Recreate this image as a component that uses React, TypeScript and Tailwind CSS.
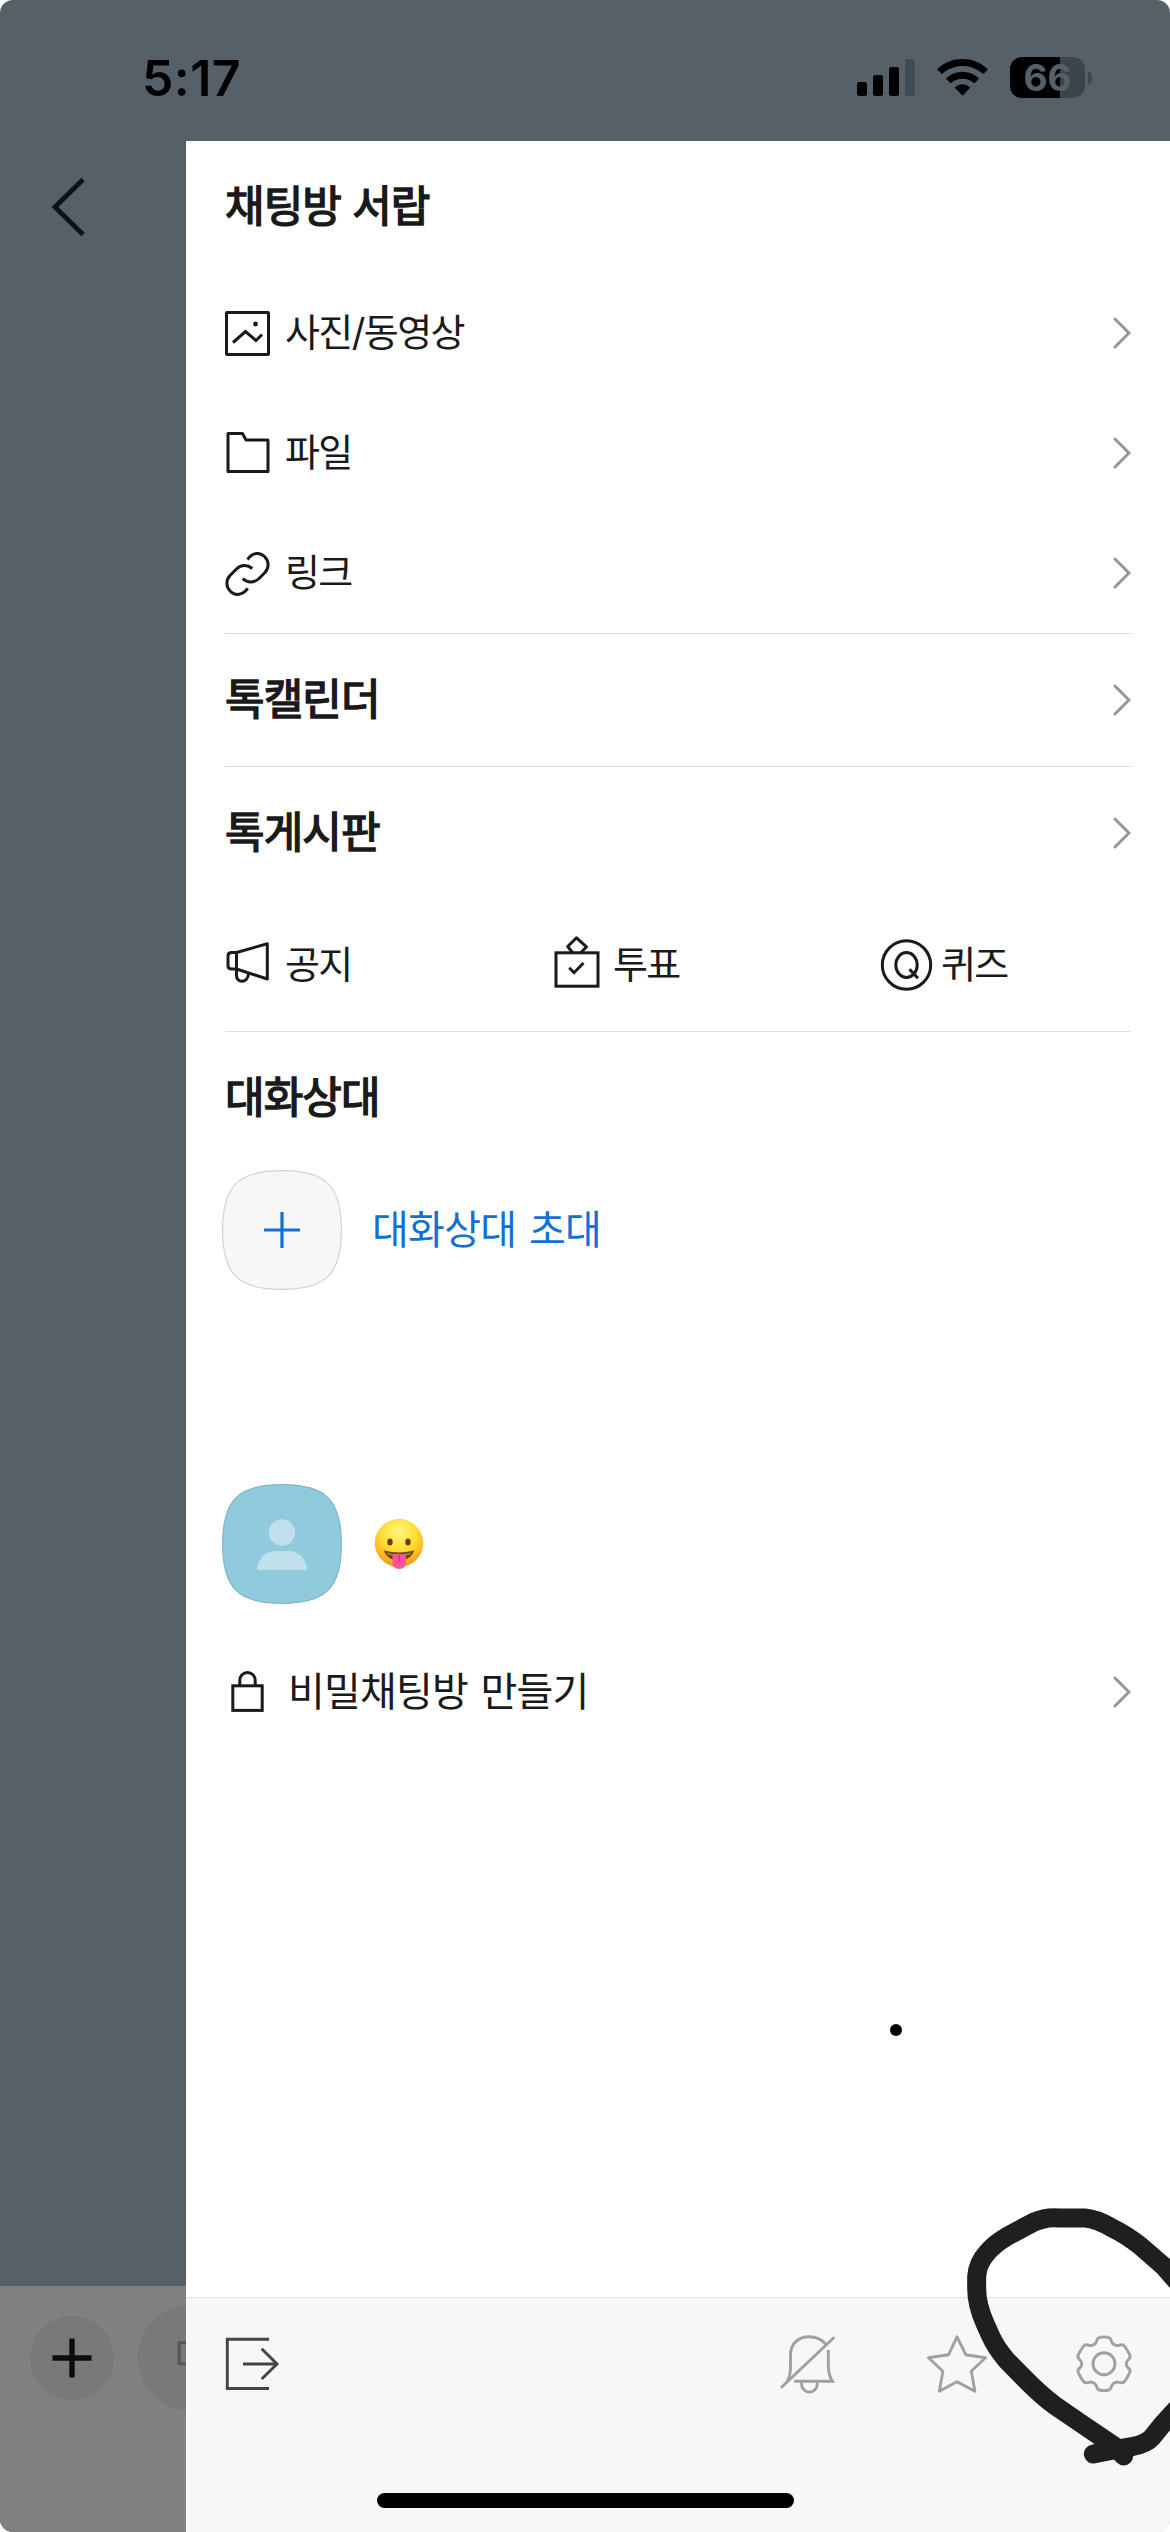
import type { ReactNode } from "react";

const ChevronRight = () => (
  <svg className="w-5 h-9" viewBox="0 0 20 36" fill="none" stroke="#969696" strokeWidth="3" strokeLinecap="round">
    <path d="M4 4L18 18L4 32" />
  </svg>
);

const LineIcon = ({ children }: { children: ReactNode }) => (
  <svg className="w-12 h-12 shrink-0 overflow-visible" viewBox="0 0 48 48" fill="none" stroke="#1a1a1a" strokeWidth="3">
    {children}
  </svg>
);

const PhotoIcon = () => (
  <LineIcon>
    <rect x="2.5" y="3.5" width="42" height="42" rx="0.5" />
    <path d="M9 33.5L21.5 22.5L32 31.5L38 25.5" />
    <circle cx="31.5" cy="15" r="2.4" fill="#1a1a1a" stroke="none" />
  </LineIcon>
);

const FolderIcon = () => (
  <LineIcon>
    <path strokeLinejoin="round" d="M4 4.5H18.5L22 11H44V42.5H4Z" />
  </LineIcon>
);

const LinkIcon = () => (
  <LineIcon>
    <path d="M23.5 10.5C29 3 36 3 40.5 7.5C45.5 12.5 45 19 41 23.5L34.5 30C30 34 23.5 34 18.7 29.7" />
    <path d="M28.3 19.5C23.5 15.5 17 15.5 12.5 20L6 26.5C2 31 1.5 37.5 6.5 42.5C11 47 18.5 46.5 23.7 39.3" />
  </LineIcon>
);

const MegaphoneIcon = () => (
  <LineIcon>
    <path strokeLinejoin="round" d="M12.5 11.5L43.3 2.8V38L12.5 28Z" />
    <path d="M12.5 11.5H7.5Q4 11.5 4 15V24.5Q4 28 7.5 28H12.5" />
    <path d="M12.5 28V34.5C12.5 42.5 24 42.5 24.5 32.5" />
  </LineIcon>
);

const VoteIcon = () => (
  <LineIcon>
    <rect x="4" y="11.8" width="42" height="33.4" />
    <path strokeLinejoin="round" d="M20.5 11.5L15.7 5.5L24.5 -3.2L34.5 5.8L29 11.5" />
    <path d="M17.3 26.7L22 31.7L31.5 22" />
  </LineIcon>
);

const QuizIcon = () => (
  <LineIcon>
    <circle cx="26.5" cy="24" r="24.2" />
    <ellipse cx="26.5" cy="24" rx="10.7" ry="12.5" />
    <path d="M29.5 28.3L38 37.3" />
  </LineIcon>
);

const LockIcon = () => (
  <LineIcon>
    <rect x="8.8" y="17.8" width="29.4" height="24.6" />
    <path d="M15.8 17.8V12.2A7.7 7.7 0 0 1 31.2 12.2V17.8" />
  </LineIcon>
);

const Squircle = ({ fill, stroke, children }: { fill: string; stroke: string; children: ReactNode }) => (
  <svg className="w-[120px] h-[120px] shrink-0" viewBox="0 0 120 120" fill="none">
    <path
      d="M60 .6C104 .6 119.4 16 119.4 60S104 119.4 60 119.4 .6 104 .6 60 16 .6 60 .6Z"
      fill={fill}
      stroke={stroke}
      strokeWidth="1.2"
    />
    {children}
  </svg>
);

const TongueEmoji = () => (
  <svg className="w-[50px] h-[52px]" viewBox="0 0 50 52" role="img" aria-label="😛">
    <defs>
      <radialGradient id="face" cx="50%" cy="28%" r="74%">
        <stop offset="0%" stopColor="#fff77c" />
        <stop offset="50%" stopColor="#fddc35" />
        <stop offset="82%" stopColor="#fab120" />
        <stop offset="100%" stopColor="#ee8d10" />
      </radialGradient>
    </defs>
    <circle cx="25" cy="25" r="24.2" fill="url(#face)" />
    <ellipse cx="16" cy="24" rx="2.7" ry="3.5" fill="#6a3c0a" />
    <ellipse cx="34" cy="24" rx="2.7" ry="3.5" fill="#6a3c0a" />
    <path d="M10 32.5Q25 36.5 40 32.5C38.5 38.5 33 42.5 25 42.5S11.5 38.5 10 32.5Z" fill="#71430c" />
    <path d="M12.5 34.5Q25 38 37.5 34.5L36.5 36.5Q25 39.5 13.5 36.5Z" fill="#fff0c8" opacity=".35" />
    <path d="M18.5 36.5Q25 35 32 36.5V43.5Q32 51 25.2 51T18.5 43.5Z" fill="#f9529c" />
    <path d="M25.2 37V44" stroke="#d9307c" strokeWidth="1.2" />
  </svg>
);

const StatusBar = () => (
  <div className="flex h-[141px] items-start justify-between pl-[142px] pr-[78px]">
    <span className="mt-[48px] text-[50px] leading-[60px] font-semibold tracking-[0.4px] text-black">5:17</span>
    <div className="mt-[57px] flex h-[41px] items-center">
      <svg className="mr-[21px] h-[41px] w-[60px]" viewBox="0 0 60 41">
        <rect x="1" y="25" width="10" height="14" rx="2.5" />
        <rect x="17" y="18" width="10" height="21" rx="2.5" />
        <rect x="33" y="10" width="10" height="29" rx="2.5" />
        <rect x="49" y="2" width="10" height="37" rx="2.5" fill="#434b52" />
      </svg>
      <svg className="mr-[22px] h-[41px] w-[51px]" viewBox="0 0 51 41">
        <path d="M.5 12.8Q0 12.3 .7 11.7C14.5-1.2 36.5-1.2 50.3 11.7Q51 12.3 50.5 12.8L46.7 16.7Q46.2 17.2 45.5 16.6C34 6.5 17 6.5 5.5 16.6Q4.8 17.2 4.3 16.7Z" />
        <path d="M9.3 22Q8.8 21.5 9.5 20.9C18.5 12.8 32.5 12.8 41.5 20.9Q42.2 21.5 41.7 22L37.8 25.8Q37.3 26.3 36.6 25.7C30.2 20.3 20.8 20.3 14.4 25.7Q13.7 26.3 13.2 25.8Z" />
        <path d="M18.2 31Q17.7 30.5 18.4 29.9C22.5 26.5 28.5 26.5 32.6 29.9Q33.3 30.5 32.8 31L26 38.2Q25.5 38.7 25 38.2Z" />
      </svg>
      <div className="flex h-[41px] w-[75px] items-center justify-center rounded-[12px] bg-[linear-gradient(90deg,#000_0_50px,#3d454c_50px)] text-[37px] leading-none font-bold text-[#566068]">
        66
      </div>
      <div className="ml-[3px] h-3 w-1 rounded-r-full bg-[#3d454c]" />
    </div>
  </div>
);

const ChatBackdrop = () => (
  <div className="flex w-[186px] shrink-0 flex-col justify-between overflow-hidden">
    <svg className="mt-[36px] ml-[50px] h-[60px] w-9" viewBox="0 0 36 60" fill="none" stroke="#111" strokeWidth="4.8">
      <path d="M33 2.5L5 30L33 57.5" />
    </svg>
    <div className="flex h-[246px] items-start bg-[#808080] pl-[30px]">
      <div className="mt-[30px] flex h-[84px] w-[84px] shrink-0 items-center justify-center rounded-full bg-[#797979]">
        <svg className="h-10 w-10" viewBox="0 0 40 40" stroke="#0d0d0d" strokeWidth="5.4">
          <path d="M20 .5V39.5M.5 20H39.5" />
        </svg>
      </div>
      <div className="mt-[19px] ml-6 h-[106px] w-[600px] shrink-0 rounded-full bg-[#797979] pl-[36px] text-[42px] leading-[104px] text-[#575757]">
        메시지 입력
      </div>
    </div>
  </div>
);

// Regular weight with a thin outline sits between the regular and bold cuts
const SectionTitle = ({ title, link }: { title: string; link?: boolean }) => (
  <div className="flex h-[132px] items-center justify-between">
    <h2 className="-mt-0.5 text-[43px] leading-none font-normal tracking-[-0.9px] text-[#1a1a1a] [-webkit-text-stroke:1.5px_#1a1a1a]">
      {title}
    </h2>
    {link && <ChevronRight />}
  </div>
);

const MenuItem = ({ icon, label }: { icon: ReactNode; label: string }) => (
  <div className="-ml-px flex items-center gap-[13px]">
    {icon}
    <span className="-mt-0.5 text-[38px] leading-none tracking-[-1.6px]">{label}</span>
  </div>
);

const MenuRow = ({ icon, label }: { icon: ReactNode; label: string }) => (
  <div className="flex h-[120px] items-center justify-between">
    <MenuItem icon={icon} label={label} />
    <ChevronRight />
  </div>
);

const Divider = () => <div className="h-px bg-[#dcdcdc]" />;

const FooterIcon = ({ color, children }: { color: string; children: ReactNode }) => (
  <svg className="h-[60px] w-[60px]" viewBox="0 0 60 60" fill="none" stroke={color} strokeWidth="2.9">
    {children}
  </svg>
);

const Footer = () => (
  <footer className="flex h-[235px] items-start justify-between border-t border-[#e4e4e4] bg-[#f7f7f7] px-9 pt-9">
    <FooterIcon color="#444">
      <path d="M47 5.2H5.3V54.5H47M21 30H55M39.7 14.7L55 30L39.7 45" />
    </FooterIcon>
    <div className="flex items-start">
      <FooterIcon color="#a0a0a0">
        <path d="M4 53.7L57.3 3.3" />
        <path d="M10.3 47C12.8 43 13.5 39 13.5 33V21C13.5 9 22 2.7 32.3 2.7C39 2.7 44.5 5.2 48.5 10" />
        <path d="M51.3 16V31C51.5 39 52.5 43 55.5 47.3H17.3" />
        <path d="M24.6 47.5V50.3A7.8 7.8 0 0 0 40.2 50.3V47.5" />
      </FooterIcon>
      <div className="w-[90px]" />
      <FooterIcon color="#a0a0a0">
        <path
          strokeLinejoin="round"
          d="M30 2.8L38.8 20.7L58.5 23.7L44.3 37.2L47.9 57.2L30 47.7L12.3 57.2L15.9 37.2L1.5 23.7L21.6 20.7Z"
        />
      </FooterIcon>
      <div className="w-[87px]" />
      <FooterIcon color="#a0a0a0">
        <circle cx="30" cy="29.8" r="11" />
        <path d="M24.5 4Q30 1.8 35.5 4C37.5 5 37 8.5 39.2 10C41.5 11.3 42.5 12.2 45 11.3C48 10.3 49.5 10.5 50.8 12.5C53 15.5 54.8 18.5 56 21.8C56.8 24 54.5 25.3 53.3 26.8C52 28.5 52 31.2 53.3 32.8C54.5 34.3 56.8 35.6 56 37.8C54.8 41.1 53 44.1 50.8 47.1C49.5 49.1 48 49.3 45 48.3C42.5 47.4 41.5 48.3 39.2 49.6C37 51.1 37.5 54.6 35.5 55.6Q30 57.8 24.5 55.6C22.5 54.6 23 51.1 20.8 49.6C18.5 48.3 17.5 47.4 15 48.3C12 49.3 10.5 49.1 9.2 47.1C7 44.1 5.2 41.1 4 37.8C3.2 35.6 5.5 34.3 6.7 32.8C8 31.2 8 28.5 6.7 26.8C5.5 25.3 3.2 24 4 21.8C5.2 18.5 7 15.5 9.2 12.5C10.5 10.5 12 10.3 15 11.3C17.5 12.2 18.5 11.3 20.8 10C23 8.5 22.5 5 24.5 4Z" />
      </FooterIcon>
    </div>
  </footer>
);

const DrawerPanel = () => (
  <div className="flex w-[984px] flex-col justify-between bg-white">
    <div className="px-[39px] text-[#1a1a1a]">
      <SectionTitle title="채팅방 서랍" />
      <MenuRow icon={<PhotoIcon />} label="사진/동영상" />
      <MenuRow icon={<FolderIcon />} label="파일" />
      <MenuRow icon={<LinkIcon />} label="링크" />
      <Divider />
      <SectionTitle title="톡캘린더" link />
      <Divider />
      <SectionTitle title="톡게시판" link />
      <div className="grid h-[132px] grid-cols-[328px_328px_1fr] items-center">
        <MenuItem icon={<MegaphoneIcon />} label="공지" />
        <MenuItem icon={<VoteIcon />} label="투표" />
        <MenuItem icon={<QuizIcon />} label="퀴즈" />
      </div>
      <Divider />
      <SectionTitle title="대화상대" />

      {/* Invite */}
      <div className="mt-1.5 -ml-[3px] flex items-center gap-[30px]">
        <Squircle fill="#f7f7f7" stroke="#d2d2d2">
          <path d="M60 42V78M42 60H78" stroke="#1271d3" strokeWidth="3.2" />
        </Squircle>
        <span className="text-[40px] leading-none tracking-[-0.7px] [word-spacing:2px] text-[#1271d3]">대화상대 초대</span>
      </div>

      {/* Member */}
      <div className="mt-[194px] -ml-[3px] flex items-center gap-[32px]">
        <Squircle fill="#90cadd" stroke="#81b6c7">
          <circle cx="60" cy="48.5" r="13.2" fill="#c0e1eb" />
          <path d="M34.8 86C35.5 74 44 67 54 67H66C76 67 84.5 74 85.2 86Z" fill="#c0e1eb" />
        </Squircle>
        <TongueEmoji />
      </div>

      {/* Secret chat */}
      <div className="mt-7 -ml-px flex h-[120px] items-center">
        <LockIcon />
        <span className="ml-4 flex-1 text-[40px] leading-none tracking-[-0.8px] [word-spacing:2px]">비밀채팅방 만들기</span>
        <ChevronRight />
      </div>
    </div>
    <Footer />
  </div>
);

const App = () => {
  return (
    <div className="bg-white">
      <div className="relative flex h-[2532px] w-[1170px] flex-col overflow-hidden rounded-[13px] bg-[#566068] font-['Inter','Noto_Sans_CJK_KR',sans-serif]">
        <StatusBar />
        <div className="flex flex-1">
          <ChatBackdrop />
          <DrawerPanel />
        </div>

        {/* Pen marks */}
        <div className="absolute top-[2024px] left-[890px] h-3 w-3 rounded-full bg-black" />
        <svg
          className="absolute top-[2180px] left-[750px] h-[352px] w-[420px]"
          viewBox="0 0 1260 1056"
          fill="none"
          stroke="#1f1f1f"
          strokeWidth="57"
          strokeLinecap="round"
          strokeLinejoin="round"
        >
          <path d="M1121 828L1090 796L1000 735L915 677Q870 643 825 597L770 541Q737 502 722 468L705 430Q680 375 680 325V290Q682 250 712 217Q735 190 770 170L850 127Q890 110 925 114H1005Q1040 117 1085 143Q1130 165 1170 197L1240 258L1290 315" />
          <path d="M1290 675L1240 730L1205 773Q1190 790 1150 799L1110 806L1030 822" />
        </svg>
        <div className="absolute top-[2493px] left-[377px] h-[15px] w-[417px] rounded-full bg-black" />
      </div>
    </div>
  );
};

export default App;
